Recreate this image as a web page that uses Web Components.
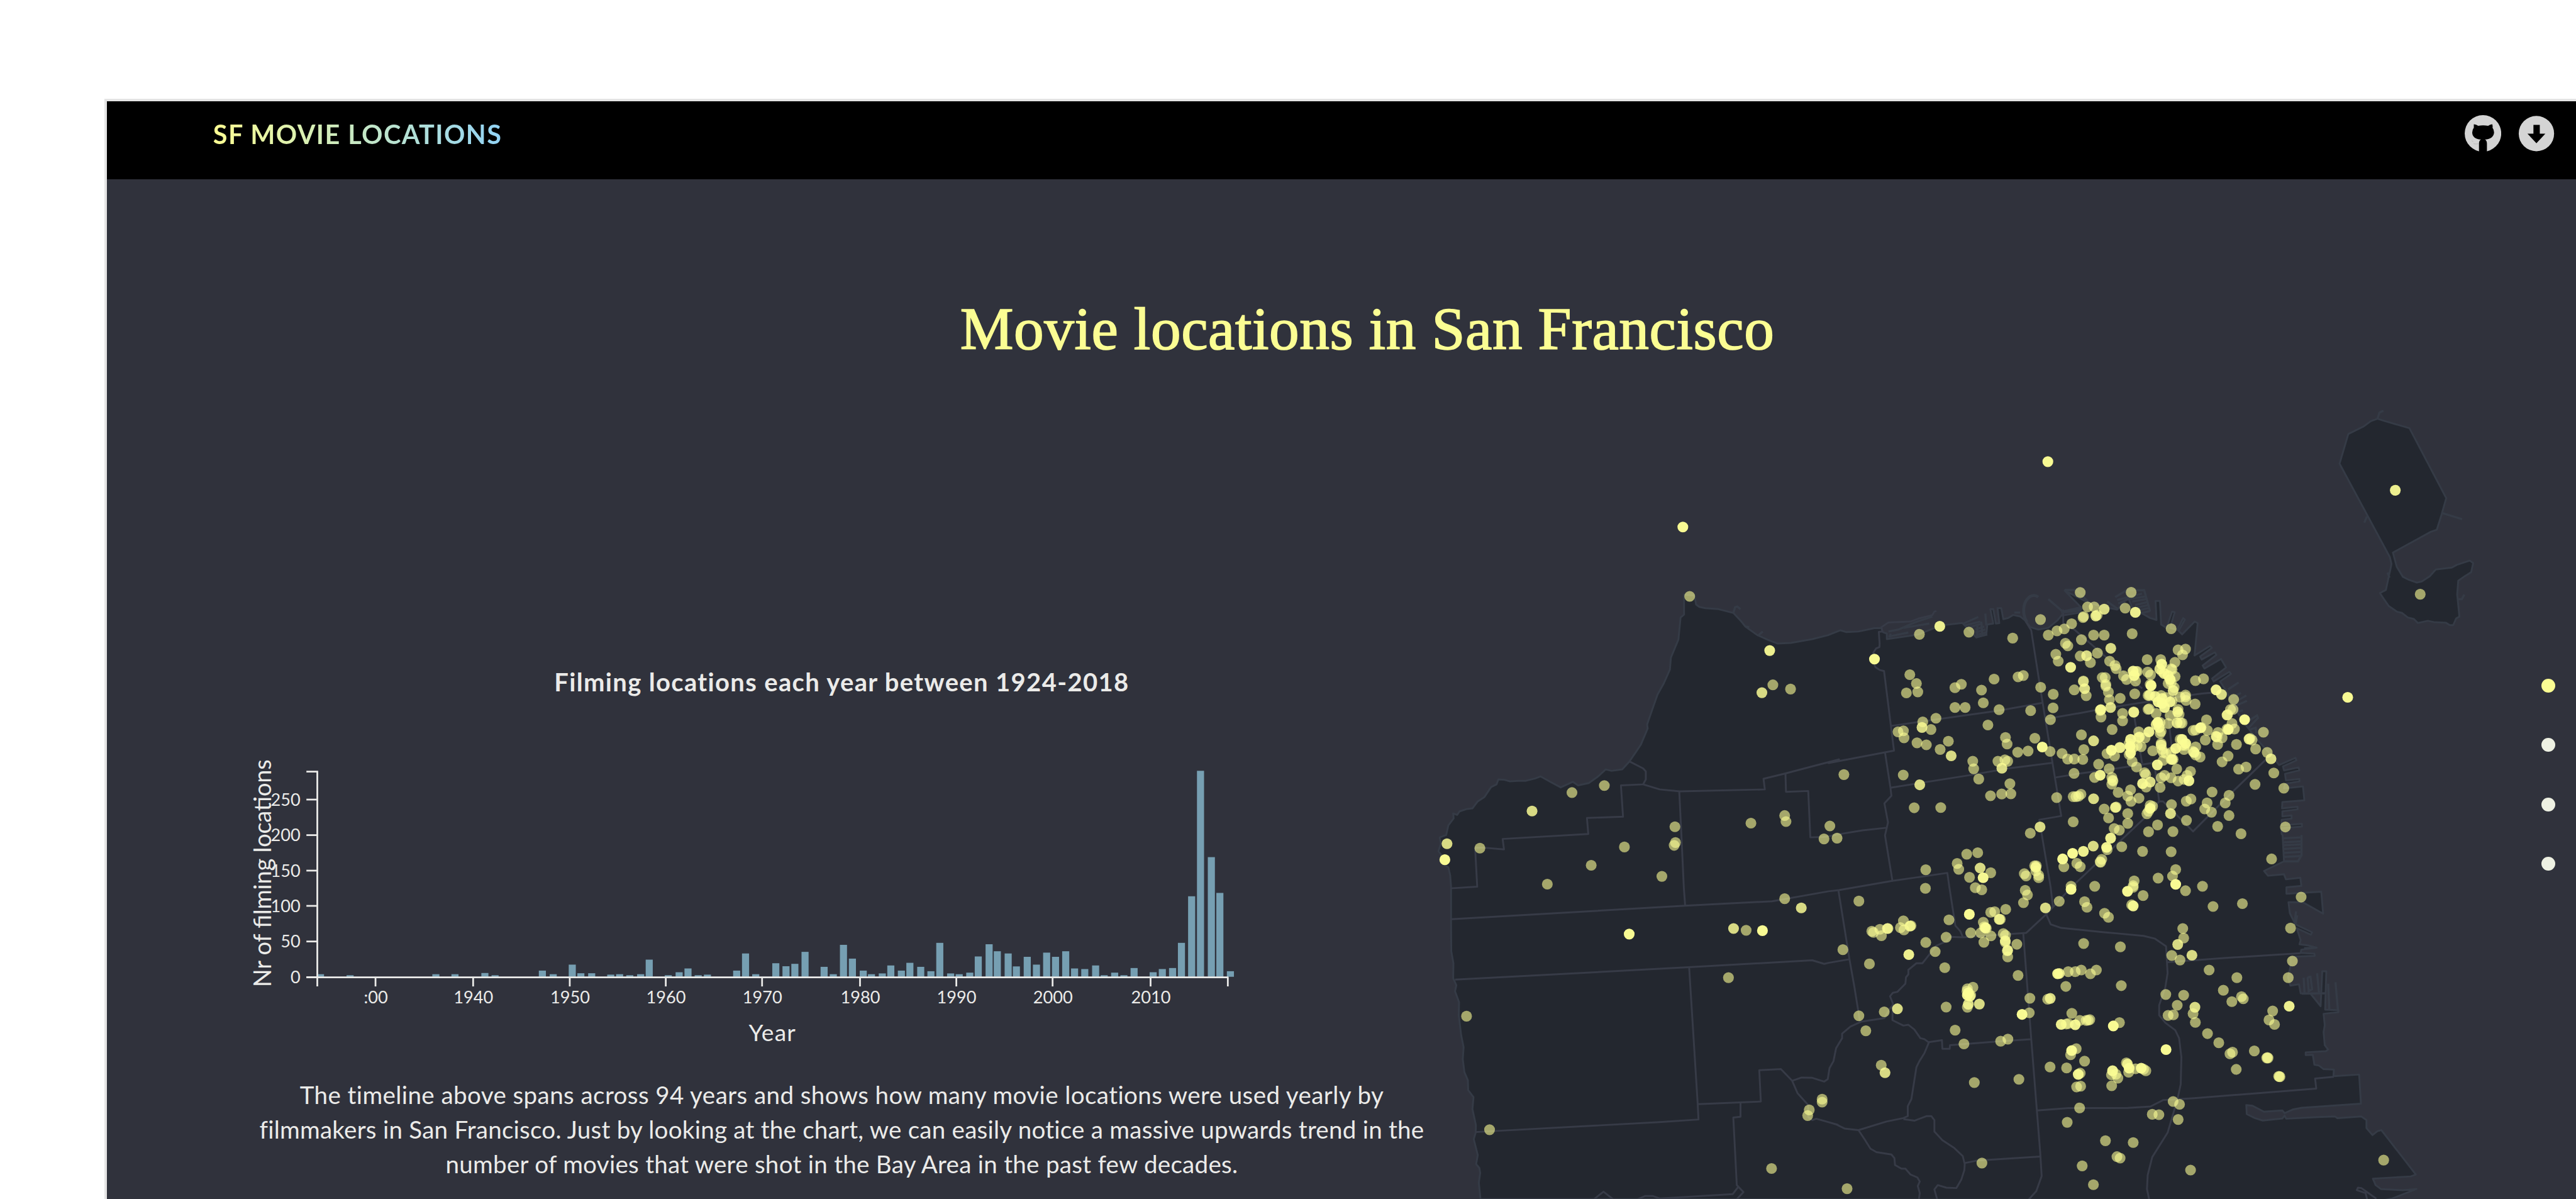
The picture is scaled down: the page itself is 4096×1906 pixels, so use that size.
<!DOCTYPE html>
<html lang="en">
<head>
<meta charset="utf-8">
<title>SF Movie Locations</title>
<style>
  html, body { margin: 0; background: #fff; overflow: hidden; }
  body { font-family: Lato, "Open Sans", sans-serif; }
</style>
</head>
<body>
<movie-page></movie-page>

<script>
const TILES = {
  A: [2380, 960, 2.24, 3], B: [2380, 1480, 2.24, 3], C: [3050, 960, 3, 3],
  D: [3440, 960, 3, 3], E: [3050, 1480, 3, 3], F: [3480, 1480, 2.6133, 3],
  G: [3860, 660, 3, 1.96], H: [380, 1240, 1.8233, 3], I: [1240, 1240, 1.8233, 3],
  Z: [0, 0, 1, 1]
};
const at = (t, x, y) => [TILES[t][0] + x / TILES[t][2], TILES[t][1] + y / TILES[t][3]];
/* "A 1,2 3,4 B 5,6" -> path data */
function trace(text) {
  let tile = 'Z', d = '';
  for (const tok of text.trim().split(/\s+/)) {
    if (TILES[tok]) { tile = tok; continue; }
    const [x, y] = tok.split(',').map(Number);
    const p = at(tile, x, y);
    d += (d ? 'L' : 'M') + p[0].toFixed(1) + ' ' + p[1].toFixed(1);
  }
  return d;
}

const MAINLAND = `B 200,1560 194,1478 199,1430 196,1405 184,1385 190,1340 175,1260 182,1228 183,1190 170,1110 174,1050 154,1015 153,965 140,925 134,860 137,800 128,740 119,640 120,575 105,520 110,490 98,455 99,380 91,320 90,160 90,5
A 90,1555 87,1500 80,1460 60,1445 55,1400 43,1380 52,1340 48,1310 72,1298 80,1250 100,1215 98,1190 113,1198 122,1180 150,1168 170,1165 190,1130 215,1108 240,1058 260,1045 267,1020 290,1022 310,1030 340,1027 370,1027 405,1015 425,1005 465,1035 500,1060 545,1032 565,1050 605,1038 640,1005 668,970 690,977 730,970 757,930 780,885 800,845 825,765 823,745 845,660 862,595 885,540 908,470 912,410 940,320 948,210 961,195 961,95 1000,100 1006,145 1018,157 1040,163 1090,168 1145,187 1172,225 1190,255 1235,298 1280,325 1310,340 1360,337 1440,318 1500,298
C 0,297 60,274 90,283 150,280 230,263 265,262 272,283 292,290 292,318 450,295 560,250 670,237 740,310 790,295 795,245 825,240 810,168 825,168 838,240 855,238 846,163 865,163 875,218 900,212 925,197 960,205 985,225 1010,258 1050,270 1100,262 1145,225 1170,195
D 0,200 90,185 95,160 12,75 130,135 200,155 275,170 330,110 350,160 400,190 440,212 472,222 467,127 489,127 495,245 522,262 550,180 563,183 540,262 575,272 605,213 614,220 583,277 600,294 663,230 678,238 662,400 740,352 749,362 690,405 698,420 764,384 772,397 703,450 712,465 795,417 820,460 750,515 758,530 836,482 845,492 790,530 820,575 845,630 880,690 920,750 975,820 1020,870 1060,915 1085,948 1168,912 1172,925 1105,955 1110,975 1183,960 1187,975 1115,992 1120,1025 1187,1018 1188,1030 1115,1042 1110,1065 1205,1055 1212,1125 1102,1133 1100,1165 1178,1157 1178,1170 1102,1180 1102,1205 1148,1200 1148,1216 1098,1222 1098,1250 1200,1242 1200,1256 1098,1264 1098,1292 1103,1300 1110,1430 1010,1478 1030,1502 1110,1495 1120,1520 1192,1512 1197,1553
F 873,0 873,32 1025,22 1033,132 945,75 882,75 888,130 912,185 985,225 980,237 918,205 935,265 930,285 965,290 1005,302 938,312 935,328 995,332 997,343 892,348 890,400 880,450 890,492 928,485 935,530 978,532 1022,595 1029,420 1047,420 1042,612 1100,615 1100,625 1035,633 1040,690 1035,725 1040,790 1055,812 1045,820 957,826 957,840 988,838 995,888 1015,892 1035,910 1080,912 1078,945 1190,937 1198,1083 940,1103 900,1112 865,1130 855,1117 775,1123 725,1093 698,1090 700,1135 735,1155 770,1167 855,1157 865,1142 872,1158 1010,1150 1085,1147 1095,1155 1200,1147 1222,1165 1222,1205 1248,1240 1270,1220 1287,1215 1437,1437 1415,1447 1250,1458 1262,1490 1285,1510 1380,1516 1440,1510 1335,1557 1300,1565`;

const BORDERS = [
  'A 757,930 808,965 818,980 818,1020 808,1045 725,1050 733,1207 598,1213 603,1293 283,1318 288,1370 215,1362 180,1362 188,1557 B 90,5',
  'A 808,1045 870,1070 945,1080 1263,1070 1258,1017 1340,990 1440,955 1540,920 C 0,938 328,876 278,478 255,472 235,458 225,435 225,385 238,365 255,358 256,340 252,282 270,280 265,258 300,235 410,230 450,215 520,198 530,180 540,178',
  'A 943,1080 951,1300 960,1560 B 965,90',
  'A 1340,990 1342,1082 1425,1078 1433,1310 1480,1308 C 0,1305 43,1296 170,1275 290,1262',
  'C 283,885 310,1060 315,1102 280,1140 298,1235 283,1300 320,1528',
  'C 315,752 850,676 1072,637', 'C 310,1062 700,1000 900,965 1125,937',
  'C 985,225 1015,275 1072,637 1165,1203 1055,1222 1112,1560 E 1123,95 1090,135',
  'C 1087,718 1260,688 D 210,665 630,600 700,590 800,582',
  'C 1137,1010 1260,990 D 240,970 470,935',
  'D 5,170 5,240 60,270 210,400 400,565', 'D 358,690 400,940', 'D 530,700 548,860',
  'D 460,930 485,1130 505,1130 655,1280 860,1075 1025,915', 'D 485,1130 410,1215 40,1565 E 1090,135 990,228 672,250 610,248 590,270 540,292 470,380 440,380 400,413 400,435 388,450 385,482 345,523 322,528 308,545 322,580 320,665 375,692 400,688 430,712 460,755 480,760 500,775 568,765 570,808 607,808 608,790 840,772 1015,760',
  'B 90,160 965,92 1290,70 E 0,20 52,14 C 320,1528 595,1488 605,1560 E 635,192 660,220 672,248',
  'E 50,18 105,360 130,500 150,625 158,680', 'B 105,462 978,400 1440,365 1485,383 E 0,378 105,360',
  'B 980,400 1012,1085 1015,1162 870,1175 180,1225',
  'B 1012,1085 1248,1072 1242,915 1323,910 1365,968 1385,1030 1425,1090 1425,1150 1440,1165 1455,1158 1535,1188 E 0,1175 40,1187 80,1207 150,1215 290,1172 375,1155 397,1145 397,1095 415,1060 440,900 455,870 480,830 503,775',
  'B 1365,968 1400,952 1440,953 1485,972 1498,960 E 5,905 25,870 38,805 68,755 68,732 110,697 165,672 280,655 305,610 322,590',
  'E 1090,135 1112,185 1165,203 1380,225 F 130,230 250,243 300,257 348,295 355,430 345,500 318,590 318,640 345,678 388,715 405,755 415,850 412,985 398,1060 355,1228 288,1350 268,1440 265,1510 275,1565',
  'F 355,375 600,354 935,330', 'E 1045,1117 1200,1105 F 180,1104 280,1097 335,1065 470,1055 1003,1007 998,957 1080,948',
  'E 975,230 1015,760 1060,1330 1067,1445 1040,1520 1000,1565',
  'E 375,1160 430,1168 490,1145 515,1145 530,1165 530,1222 570,1265 630,1305 672,1345 682,1385 680,1415 665,1462 640,1505 590,1503 547,1490 530,1512 545,1565',
  'E 682,1380 740,1368 1060,1347',
  'E 150,1215 180,1260 210,1308 240,1325 315,1337 330,1355 333,1390 365,1408 385,1408 410,1437 445,1452 457,1472 447,1495 457,1530 452,1565',
  'B 1172,1078 1172,1148 1145,1152 1158,1490 1183,1525 1155,1565', 'B 1163,1500 1143,1535 870,1557 845,1545 815,1545 785,1562', 'B 625,1560 660,1523 697,1562',
  'F 1225,1562 1218,1530 1180,1515 1185,1503 1200,1505 1230,1530 1265,1558'
];
/* Piers, breakwaters and marinas: thin slips along the shore. */
const PIERS = [
  'A 1145,187 1152,158 1160,155 1172,168', 'A 1240,298 1255,280', 'A 1190,255 1205,258',
  'C 300,280 350,270 430,235 520,205', 'C 300,305 400,285', 'C 375,262 505,240', 'C 310,290 310,310',
  'C 675,240 750,207', 'C 680,250 760,230', 'C 735,270 780,255', 'C 735,285 785,270', 'C 738,298 790,285', 'C 740,308 795,295', 'C 785,190 790,250', 'C 700,260 770,240','C 745,250 745,305','C 765,230 770,300',
  'C 930,185 960,185', 'C 1100,118 1172,180 1260,160', 'C 1165,185 1260,175', 'C 1180,75 1250,70',
  'D 0,180 100,165', 'D 12,72 70,72 130,130', 'D 225,130 280,168',
  'D 265,108 320,75 410,73 440,180', 'D 275,122 400,90', 'D 280,140 330,118 415,105', 'D 350,130 420,118', 'D 365,148 425,133', 'D 370,162 430,148', 'D 375,176 435,162', 'D 385,190 438,178',
  'D 830,570 883,535', 'D 845,610 895,588', 'D 862,635 922,600', 'D 870,650 925,627', 'D 880,680 905,675', 'D 920,735 975,700 980,712 930,765', 'D 940,770 968,762 972,790',
  ...[1315, 1335, 1350, 1368, 1388, 1408].map(y => `D 1108,${y} 1195,${y - 5}`), 'D 1198,1298 1198,1400 1180,1430 1110,1430',
  'F 915,120 908,180', 'F 920,140 912,190', 'F 948,452 952,530', 'F 965,450 970,520 985,510 978,448 965,450', 'F 1007,430 1015,530', 'F 1055,482 1060,610', 'F 1087,475 1098,620', 'F 940,532 1045,530', 'F 950,305 1003,302',
  'G 318,75 328,55 348,49', 'G 265,395 252,415', 'G 640,383 742,404', 'G 720,665 740,665 753,650', 'G 368,578 378,595'
];
const ISLAND = 'G 318,75 350,82 478,106 662,335 638,390 615,438 585,445 395,513 415,560 445,592 475,602 515,611 540,607 580,590 610,568 690,562 715,553 780,539 797,547 787,577 755,590 722,605 717,650 728,722 712,728 697,750 680,750 660,742 600,740 570,736 520,743 500,730 470,725 440,710 415,706 375,688 350,665 330,645 360,635 374,592 382,570 388,550 380,528 128,222 172,125 250,100 285,83';

/* x,y[,films]: every pin of a tile; the count stacks translucent pins. */
const PINS = {
  Z: '3416,770,5 2807,879,5',
  A: '982,104 1281,375,3 1293,547 1359,568 1252,586,2 663,1051 542,1086 393,1178,2 75,1342,2 67,1422,5 198,1364 927,1257 929,1336 924,1350 738,1358 614,1450 878,1505 450,1544 1211,1239 1337,1201 1342,1231 1484,1318',
  B: '1337,57 1399,103,2 1146,206,2 1193,215 1254,217,5 756,234,5 1127,452 148,645 234,1213 1477,1060 1477,1075 1429,1114 1423,1142 1288,1407',
  C: '455,294 557,254,3 703,283 922,313 1061,220 230,418,5 1100,298 1144,277 1180,267 1186,339 1198,352 1138,394 1150,428 407,496 440,540 390,587 447,582 633,561 665,544 766,573 829,518 949,507 975,500 1062,559 1125,594 1124,662 1111,721 633,660 684,660 775,637 854,671 1012,676 798,748 538,714 472,732 468,760,2 513,770 348,782 375,777 378,812 443,837 490,847 559,870 600,829 614,902,2 722,929 727,967 752,1018 374,998 457,1047,2 77,996 429,1162 562,1161 886,810 894,843 947,884 999,878 1033,814 1070,858,4 1109,880 1169,890 848,929 883,922 897,929 868,964,2 908,1042 867,1093 913,1092 811,1102 1142,1111 1059,1258,2 1010,1289 7,1253 43,1314 692,1394 747,1387 644,1441 652,1470 759,1463,2 812,1487 774,1512,4 706,1510 487,1472 1032,1452 1040,1452 1038,1460,2 1038,1478 980,1492 989,1503 1052,1500 1052,1512 1172,1418,4 1178,1457',
  D: '90,85 345,84 127,157 160,157 210,168,2 107,205 104,210 168,202,2 175,198 315,163 366,184,3 47,241 157,298 210,298 350,291 545,266 96,321 243,364,2 90,403 122,401,2 176,388 141,435 42,459,3 237,428 264,450 270,466 580,372 617,368 602,397 564,434 425,421 307,502 322,520 355,478,3 360,500,3 370,480 376,480 367,528 428,483 442,497 200,510 215,510 106,528 106,530 60,572 112,566,2 120,601 218,545 218,553 231,583 236,621 290,614 363,592 493,421 498,443,3 488,468,2 500,480 510,490,2 530,500,2 545,466 550,470 540,520,3 545,535 565,505 555,575,2 560,560 530,540 445,550,4 440,545 436,600 440,595 430,600 465,605,2 480,632,3 500,615,2 500,640,3 512,660,3 495,600 520,610 540,632,2 550,628 590,608 617,607 617,598 620,625 665,643 430,670 435,667 470,690 580,670 578,682,2 585,695 540,700 530,740 575,737,2 592,737 600,738 478,735,4 470,745,2 490,735 485,760,2 495,780 490,790 434,782,3 383,782 386,808,2 380,812 415,812 342,820,3 340,855,4 342,888,3 335,840 355,860 395,856 375,850 288,860,2 290,862 246,874,4 224,891 262,903 335,895 350,930 372,958 193,671,3 190,675 194,708 242,660,2 302,690 302,727 358,684,2 358,682 250,770 96,797 157,827,2 108,871 27,918 60,918 103,920 182,944 59,990 235,967 162,1010 190,999,3 248,1010 252,1024 254,1028 248,1043 280,1085 342,1072 328,1103 344,1130 384,1114 412,986 418,996 402,1041,3 440,1033,2 420,1058 495,1012 512,1000 545,1012 580,1028 490,1060 573,968 642,980 625,1000 610,1020 634,1027,3 476,947,3 505,925 550,920,2 545,920 555,920 453,877 495,848,2 495,840 505,885 500,870 520,890 568,865,3 545,885 600,820,3 618,840,3 615,850 600,850 590,820 668,857 660,885,2 655,880 668,898 690,908 610,870 655,775 668,773 692,762,3 695,760 722,722 727,775 716,823 780,785 770,805,2 775,808 800,812 778,845 872,845 831,770,4 825,768 850,740 862,768 825,698,2 828,695 842,670 855,670 858,620 770,572,3 797,595,2 667,526 707,517 913,721,5 935,818,2 940,815 950,823 968,868 1007,784 1026,885 1045,917,2 1059,988 800,932 830,903 883,969 920,958 965,1045 1109,1064 1117,1258 1048,1418 55,1106 69,1106 82,1104 94,1094 157,1117,2 210,1168 266,1160,2 270,1158 232,1213 328,1191 328,1240 55,1232 260,1266 286,1274 440,1150 440,1165,3 432,1180 452,1155 424,1192 477,1248 432,1282 554,1281 547,1146 542,1191,2 621,1129 644,1118 622,1225 725,1138 713,1168 747,1184 750,1083 835,1100 816,1138 835,1201 778,1255 895,1292 545,1382 402,1380 298,1357 242,1314,3 222,1360,3 225,1372 155,1354,2 106,1380,3 52,1390,5 73,1440 90,1457 198,1420 192,1435 190,1432 568,1471 552,1504 480,1514 568,1545,5 360,1528 44,1555',
  E: '485,5 735,2 767,12 985,15 996,38 976,77 152,69 1086,103,2 1155,70 1214,10,4 1282,72 1294,100 375,168 257,210 217,220 225,226 265,242 295,206,2 298,206 360,202 378,213 408,194,2 413,192 603,163 705,135,5 589,250 487,276 534,322 402,337,3 205,383 72,312 812,125 832,122 855,160,2 860,160 887,110 775,175 712,228 762,228 785,203,3 790,205 780,198 813,243 778,275 875,232 886,240 885,268,2 885,275 897,315,2 895,318 897,348 943,285 1277,281 582,402 949,441 1008,555 1147,433,3 1155,431,2 1200,422 1235,422 1265,414 1311,433 1341,414 1188,496 1097,560 1110,556,2 695,508 723,500 693,520 700,528,3 695,540,3 708,545,2 712,540 700,585,2 695,600 755,584,2 589,599 969,636,5 1005,628 152,643 279,623 345,608,2 187,718 634,715 678,784 862,770 898,760 264,890 283,928,2 730,977 953,961 1218,631 1165,686,3 1190,684 1200,682 1235,688,3 1258,666 1290,666 1300,665 1308,662 1212,838 1217,817,4 1240,808 1282,870 1192,904 1109,899 1250,936,3 1260,930 1242,999 1262,995 1257,1104 1195,1176 1270,1394 1326,1488 768,1380 93,1508',
  F: '37,-5 180,20,4 205,0 205,-8 433,17 507,-5 248,41 198,88 205,93,3 80,130 97,150 553,96 681,82 149,298 153,492 937,49 891,204 899,369 881,452 421,206 425,254 399,286,2 461,340,2 373,341 409,364 536,414 657,452 598,515 347,536 425,540 397,590 357,641 380,638 474,600,2 466,632 476,676 677,547 685,558 635,572 813,619 797,664 821,686 885,595,3 529,732 578,778 638,825 627,833 733,819 654,911 787,854 790,852 793,854 839,946 845,948 842,947 145,677 118,694,5 348,812,5 175,878 180,885,2 187,905,3 185,925 215,908 240,905,3 250,910 260,918 115,918,3 110,938 130,935 138,955 111,993 379,1072 407,1086 288,1136 317,1138 401,1162 84,1268 205,1277 134,1348 148,1355 455,1415 1297,1365',
  G: '407,309,3 532,649 169,986,5'
};

/* x,top of each bar */
const BARS = {
  H: '271,1156 361,1161 622,1156 680,1156 771,1150 802,1161 946,1138 979,1156 1037,1108 1063,1151 1096,1151 1154,1158 1181,1156 1212,1161 1245,1156 1271,1083 1329,1161 1362,1146 1389,1127 1420,1161 1448,1158 1537,1138 1564,1052',
  I: '27,1156 88,1101 119,1116 146,1104 177,1044 235,1119 263,1156 294,1009 321,1078 354,1138 379,1156 412,1152 438,1112 470,1138 496,1099 529,1119 560,1141 587,999 620,1152 646,1156 678,1148 704,1067 737,1006 762,1041 795,1052 820,1117 853,1069 881,1108 912,1048 939,1069 970,1041 997,1127 1028,1130 1061,1112 1087,1161 1119,1148 1147,1161 1178,1125 1236,1146 1264,1130 1295,1125 1322,999 1353,766 1380,138 1413,570 1439,749 1471,1141'
};

const define = (name, html, setup) => customElements.define(name, class extends HTMLElement {
  constructor() {
    super();
    this.attachShadow({ mode: 'open' }).innerHTML = typeof html === 'function' ? html() : html;
  }
  connectedCallback() { if (setup) setup(this, this.shadowRoot); }
});

/* One line of text, tracked so that it spans the given measure. */
define('fit-line', `<style>:host{display:block;white-space:pre;text-align:center}</style><slot></slot>`, host => {
  const c = document.createElement('canvas').getContext('2d');
  c.font = host.getAttribute('face');
  const text = host.textContent, want = +host.getAttribute('measure');
  host.style.letterSpacing = ((want - c.measureText(text).width) / (text.length - 1)).toFixed(3) + 'px';
});

define('site-header', `<style>
  :host{display:flex;justify-content:space-between;align-items:flex-start;box-sizing:border-box;height:131px;background:#000;padding:24px 37px 0 177px}
  .brand{margin-top:2px;font:700 43.5px/60px Lato,sans-serif;background:linear-gradient(90deg,#fbfd93,#92d3f5);-webkit-background-clip:text;background-clip:text;color:transparent}
  nav{display:flex;gap:28px;align-items:center}
  svg{display:block;width:61px;height:61px}
</style>
<fit-line class="brand" face="700 43.5px Lato" measure="482">SF MOVIE LOCATIONS</fit-line>
<nav>
  <svg viewBox="640 155 184 184"><circle cx="732" cy="247" r="92" fill="#d4d4d4"/><path d="M686 201Q698 202 708 209Q732 204 758 209Q768 202 779 201Q782 212 780 218Q788 228 788 242Q786 274 742 278Q752 284 752 298V345H712V298Q712 284 722 278Q678 274 678 242Q678 228 686 218Z" fill="#000"/><path d="M675 283l8 6M685 299q12 3 24 0" stroke="#aaa" stroke-width="2" fill="none"/></svg>
  <svg viewBox="906 155 184 184"><circle cx="998" cy="248" r="89" fill="#d4d4d4"/><path d="M983 204H1015V248H1043L998 297L953 248H983Z" fill="#000"/></svg>
</nav>`);

define('year-chart', () => {
  let bars = '';
  for (const t in BARS) for (const b of BARS[t].split(' ')) {
    const [x, y] = at(t, ...b.split(',').map(Number));
    bars += `<rect x="${x.toFixed(1)}" y="${y.toFixed(1)}" width="11.8" height="${(1629.6 - y).toFixed(1)}"/>`;
  }
  const yt = [[0, 1630.3], [50, 1570.7], [100, 1511.3], [150, 1452.5], [200, 1393.3], [250, 1334]];
  const xt = [[':00', 626.3], ['1940', 789.2], ['1950', 950.4], ['1960', 1110.6], ['1970', 1271.3], ['1980', 1434.7], ['1990', 1595.4], ['2000', 1756], ['2010', 1919.5]];
  return `<style>:host{display:block}svg{display:block;overflow:visible}text{fill:#ebebe9;font-family:Lato,sans-serif}</style>
  <svg width="1948" height="500" viewBox="430 1250 1948 500">
    <g fill="#769fb2">${bars}</g>
    <g stroke="#ebebe9" stroke-width="2.9" fill="none">
      <path d="M511 1287.4H529.2V1645.7M511 1630.4H2049.5M2048.4 1630V1645.7"/>
      ${yt.map(t => `<path d="M511 ${t[1]}H529"/>`).join('')}${xt.map(t => `<path d="M${t[1]} 1630V1645.7"/>`).join('')}
    </g>
    <g font-size="28.5">
      ${yt.map(t => `<text x="501" y="${t[1] + 10}" text-anchor="end">${t[0]}</text>`).join('')}
      ${xt.map(t => `<text x="${t[1] + .5}" y="1674" text-anchor="middle">${t[0]}</text>`).join('')}
    </g>
    <text x="1288" y="1736.7" font-size="39" text-anchor="middle" textLength="78">Year</text>
    <text transform="translate(452.3 1647) rotate(-90)" font-size="40" textLength="380">Nr of filming locations</text>
  </svg>`;
});

define('city-map', () => {
  let pins = '';
  for (const t in PINS) for (const p of PINS[t].split(' ')) {
    const [lx, ly, n = 1] = p.split(',').map(Number);
    const [x, y] = at(t, lx, ly);
    pins += `<circle cx="${x.toFixed(1)}" cy="${y.toFixed(1)}" r="9" fill-opacity="${(1 - Math.pow(.4, n)).toFixed(3)}"/>`;
  }
  return `<style>:host{display:block}svg{display:block}</style>
  <svg width="1800" height="1360" viewBox="2378 640 1800 1360">
    <g fill="#23272f" stroke="#353b46" stroke-width="3.1" stroke-linejoin="round"><path d="${trace(MAINLAND)}Z"/><path d="${trace(ISLAND)}Z"/></g>
    <g fill="none" stroke="#373b47" stroke-width="3.1" stroke-linejoin="round">${BORDERS.map(b => `<path d="${trace(b)}"/>`).join('')}</g>
    <path d="M3400 996Q3394 991 3386 995Q3374 1004 3376 1024Q3377 1030 3381 1038" fill="none" stroke="#353b46" stroke-width="5"/>
    <g fill="none" stroke="#353b46" stroke-width="3.6">${PIERS.map(b => `<path d="${trace(b)}"/>`).join('')}</g>
    <g fill="#fbfd95">${pins}</g>
  </svg>`;
});

define('section-dots', `<style>
  :host{display:flex;flex-direction:column;gap:76.2px}
  i{width:23px;height:23px;border-radius:50%;background:#eef1e3}
  i:first-of-type{background:#fbfd93}
</style><i></i><i></i><i></i><i></i>`);

define('chart-story', `<style>
  :host{display:flex;flex-direction:column;color:#ebebe9}
  .head{font:700 42px/60px Lato,sans-serif;margin-top:468.5px}
  year-chart{margin-top:81.5px}
  .copy{margin-top:48px;font:400 40.5px/57.3px Lato,sans-serif}
</style>
<fit-line class="head" face="700 42px Lato" measure="961">Filming locations each year between 1924-2018</fit-line>
<year-chart></year-chart>
<div class="copy">
<fit-line face="400 40.5px Lato" measure="1816">The timeline above spans across 94 years and shows how many movie locations were used yearly by</fit-line>
<fit-line face="400 40.5px Lato" measure="1948">filmmakers in San Francisco. Just by looking at the chart, we can easily notice a massive upwards trend in the</fit-line>
<fit-line face="400 40.5px Lato" measure="1328">number of movies that were shot in the Bay Area in the past few decades.</fit-line>
</div>`);

define('movie-page', `<style>
  :host{display:block;zoom:.953;box-sizing:border-box;width:4299px;height:2001px;padding:164.5px 0 0 174.5px;overflow:hidden}
  .frame{padding:4px 0 0 4px;box-sizing:border-box;height:1837px;background:#e4e4e4;overflow:hidden}
  .app{height:1833px;background:#30323c;overflow:hidden}
  .title{font:400 100px/120px "Liberation Serif",serif;color:#fbfd93;-webkit-text-stroke:1.8px #fbfd93;margin:189px 0 31.5px 85px}
  .row{display:flex;align-items:flex-start;padding-left:252px}
  chart-story{flex:0 0 1948px}
  city-map{flex:0 0 1800px}
  section-dots{margin:492px 0 0 62px}
</style>
<div class="frame"><div class="app">
  <site-header></site-header>
  <fit-line class="title" face="400 100px Liberation Serif" measure="1358">Movie locations in San Francisco</fit-line>
  <div class="row"><chart-story></chart-story><city-map></city-map><section-dots></section-dots></div>
</div></div>`);
</script>
</body>
</html>
